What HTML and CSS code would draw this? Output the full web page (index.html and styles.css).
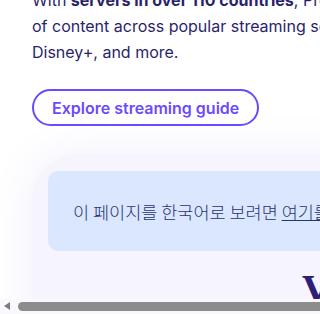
FILE: index.html
```html
<!DOCTYPE html>
<html lang="en">
<head>
<meta charset="utf-8">
<link rel="stylesheet" href="styles.css">
</head>
<body>
<main class="page">
  <div class="intro">
    <p class="lead">With <strong>servers in over 110 countries</strong>, Proton VPN lets you access thousands<br>of content across popular streaming services like Netflix,<br>Disney+, and more.</p>
    <a class="btn-outline" href="#">Explore streaming guide</a>
  </div>
  <section class="lang-section">
    <div class="lang-card">
      <p class="lang-text">이 페이지를 한국어로 보려면 <a href="#">여기를</a> 클릭하세요.</p>
    </div>
    <h2 class="next-title">VPN</h2>
  </section>
</main>
<div class="hscroll" aria-hidden="true">
  <span class="hscroll-arrow"></span>
  <span class="hscroll-thumb"></span>
</div>
</body>
</html>
```

FILE: styles.css
```css
html, body {
  margin: 0;
  padding: 0;
  background: #ffffff;
  overflow: hidden;
  height: 314px;
}
body {
  font-family: Inter, "Noto Sans", sans-serif;
  color: #2a1f6b;
}
.page {
  width: 320px;
  overflow: hidden;
}
.intro {
  padding-left: 32px;
}
.lead {
  margin: -13px 0 0 0;
  font-size: 16px;
  line-height: 26px;
  white-space: nowrap;
}
.lead strong {
  font-weight: 700;
}
.btn-outline {
  display: inline-flex;
  align-items: center;
  box-sizing: border-box;
  height: 37px;
  margin-top: 24px;
  padding: 0 18px;
  border: 2px solid #6d4aff;
  border-radius: 20px;
  color: #6d4aff;
  font-size: 16px;
  font-weight: 600;
  text-decoration: none;
  white-space: nowrap;
}
.lang-section {
  margin: 28px 0 0 32px;
  padding: 17px 0 0 16px;
  width: 420px;
  height: 200px;
  background: #f6f4fc;
  border-radius: 48px;
  box-shadow: 0 0 40px 10px #f6f4fc;
}
.lang-card {
  width: 400px;
  height: 80px;
  box-sizing: border-box;
  padding-left: 25px;
  display: flex;
  align-items: center;
  background: #dbe7fe;
  border-radius: 10px;
}
.lang-text {
  margin: 0;
  font-family: "Noto Sans CJK KR", sans-serif;
  font-size: 17.5px;
  font-weight: 300;
  color: #263470;
  white-space: nowrap;
}
.lang-text a {
  color: #263470;
  text-decoration: underline;
}
.next-title {
  margin: 14px 0 0 254px;
  font-family: "Liberation Serif", serif;
  font-weight: 700;
  font-size: 40px;
  line-height: 48px;
  color: #2d1f78;
  white-space: nowrap;
}
.hscroll {
  position: fixed;
  left: 0;
  bottom: 0;
  width: 320px;
  height: 15px;
  background: #f9f8fc;
}
.hscroll-arrow {
  position: absolute;
  left: 4px;
  top: 3px;
  width: 0;
  height: 0;
  border-top: 4px solid transparent;
  border-bottom: 4px solid transparent;
  border-right: 6px solid #7c7c7c;
}
.hscroll-thumb {
  position: absolute;
  left: 18px;
  top: 3px;
  width: 320px;
  height: 9px;
  border-radius: 5px;
  background: #8c8c8c;
}
```
